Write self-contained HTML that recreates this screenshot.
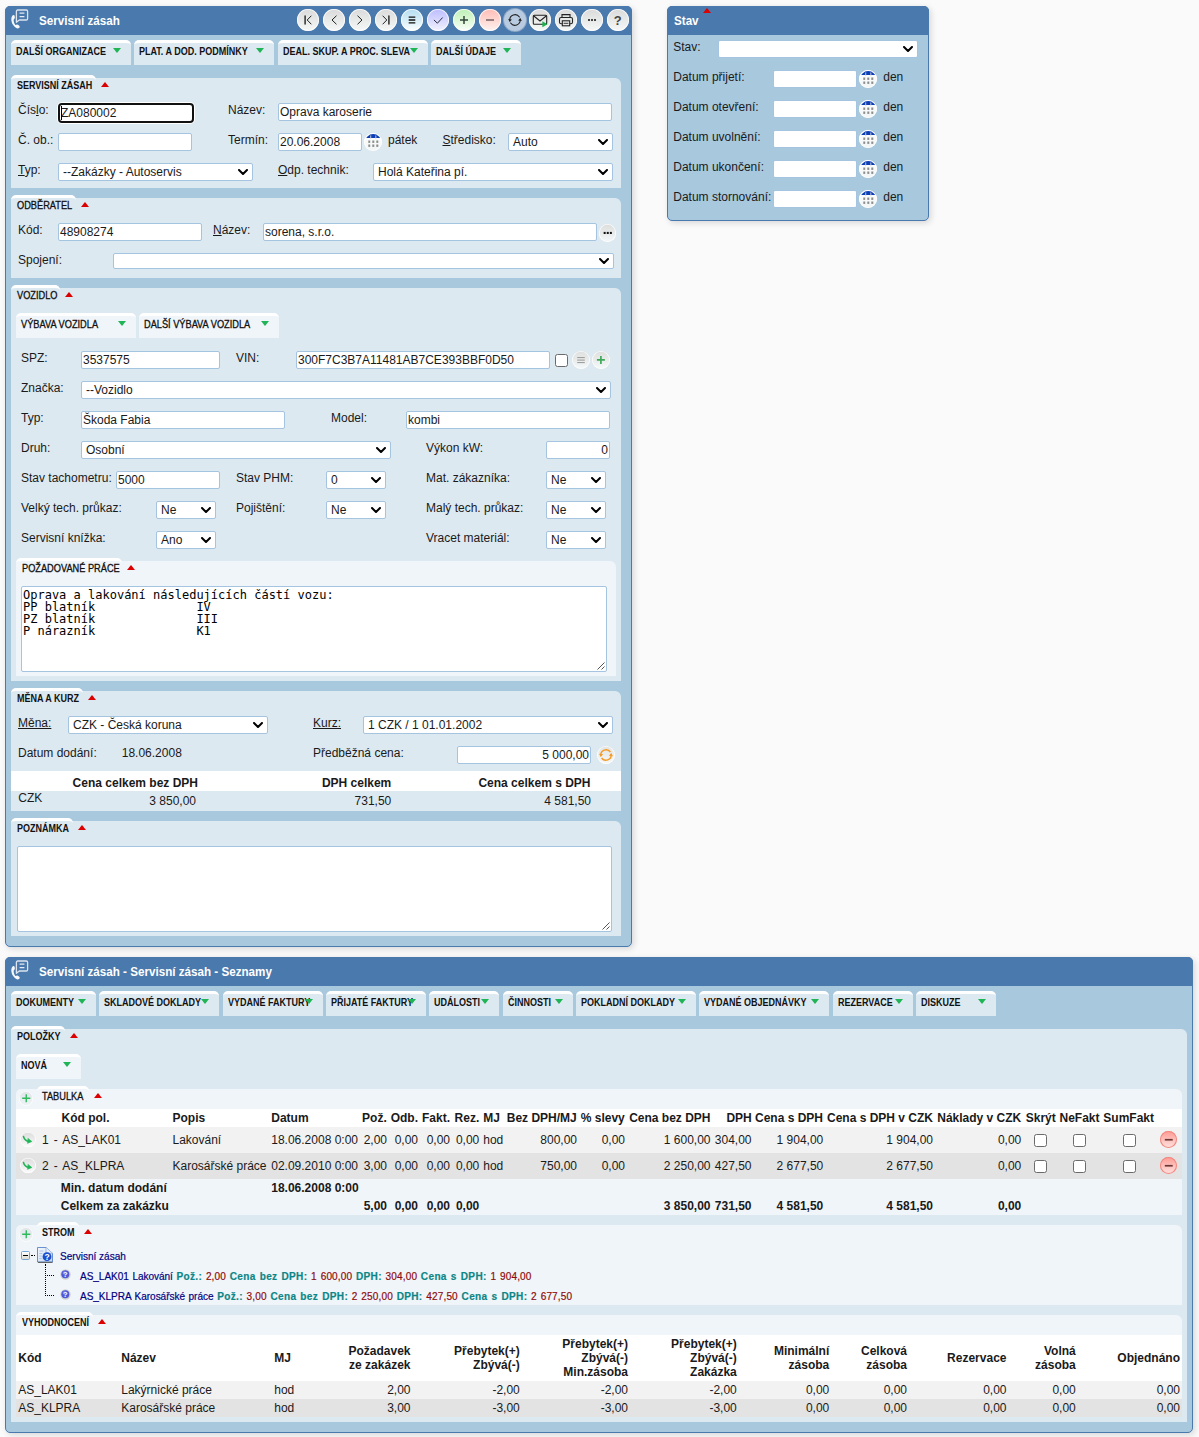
<!DOCTYPE html><html lang="cs"><head><meta charset="utf-8"><title>Servisní zásah</title><style>
*{box-sizing:border-box}
html,body{margin:0;padding:0}
body{width:1199px;height:1437px;position:relative;overflow:hidden;background:#fafafa;font-family:"Liberation Sans",sans-serif;font-size:12px;color:#1a1a1a;line-height:14px}
.a{position:absolute;white-space:nowrap}
.panel{position:absolute;background:#a8c8de;border:1px solid #4a79ad;border-radius:5px;box-shadow:2px 2px 6px rgba(0,0,0,.14)}
.ttl{position:absolute;background:#4a79ad}
.tt{position:absolute;color:#fff;font-weight:bold;font-size:12px;white-space:nowrap;transform:scaleX(.97);transform-origin:0 50%}
.tab{position:absolute;background:#dde9f1;border-top:3px solid #fff;border-radius:5px 5px 0 0}
.tab.sub{background:#f0f5f9}
.nt{position:absolute;font-weight:bold;font-size:10px;line-height:12px;white-space:nowrap;transform:scaleX(.90);transform-origin:0 50%;color:#111}
.nt.m{font-weight:normal;-webkit-text-stroke:.3px #111;transform:scaleX(.922)}
.tg{position:absolute;width:0;height:0;border-left:4px solid transparent;border-right:4px solid transparent;border-top:5px solid #1fb455}
.tr{position:absolute;width:0;height:0;border-left:4px solid transparent;border-right:4px solid transparent;border-bottom:5px solid #dc0000}
.sec{position:absolute;background:#dde9f1;border-radius:5px 6px 0 0}
.sec.sub{background:#f0f5f9}
.stab{position:absolute;background:#dde9f1;border-top:3px solid #fff;border-radius:5px 5px 0 0}
.stab.sub{background:#f0f5f9}
.in{position:absolute;background:#fff;border:1px solid #a4c4e0;border-radius:2px;white-space:nowrap;overflow:hidden;padding:0 1px;font-size:12px}
.in.r{text-align:right}
.se{position:absolute;background:#fff;border:1px solid #a4c4e0;border-radius:2px;white-space:nowrap;overflow:hidden;padding:0 0 0 4px;font-size:12px}
.se svg{position:absolute;right:4px;top:50%;margin-top:-3px}
.rb{position:absolute;border-radius:50%;background:linear-gradient(#dadada,#f6f8f8);box-shadow:inset 0 0 0 .8px rgba(255,255,255,.85)}
.cb{position:absolute;width:13px;height:13px;background:#fff;border:1px solid #6b6b6b;border-radius:2.5px}
.b{font-weight:bold}
u{text-decoration:underline}
</style></head><body>
<div class="panel" style="left:5px;top:6px;width:627.3px;height:940.7px"></div>
<div class="ttl" style="left:5px;top:6px;width:627px;height:29px;border-radius:5px 5px 0 0"></div>
<svg class="a" style="left:10px;top:9px" width="19" height="20" viewBox="0 0 19 20" fill="none" stroke="#fff" stroke-linecap="round" stroke-linejoin="round"><path d="M7.700 1h8.600a1.300 1.300 0 0 1 1.300 1.300v7.400a1.300 1.300 0 0 1-1.300 1.300H9.300L6.400 13.300V2.300A1.300 1.300 0 0 1 7.700 1z" stroke-width="1.300" opacity=".8"/><path d="M9.600 4.200h4.800M9.600 7.600h4.800" stroke-width="1.300" opacity=".85" stroke-linecap="butt"/><path d="M2.500 6.500C.6 9 1.100 13 3.200 16.100c1.200 1.800 2.800 3.300 4.200 3.400 1.400.1 2.600-.8 2.300-1.900-.3-1-1.700-2.200-2.700-2.100-.7.100-1 .7-1.500.4C4.300 14.700 3.500 12.500 3.700 10.700c.1-.8.900-1 1.100-1.800.2-.9-.1-2.100-.6-2.700-.4-.5-1.300-.3-1.700.3z" fill="#fff" stroke="none" opacity=".95"/></svg>
<div class="tt" style="left:39px;top:13.5px;line-height:14px">Servisní zásah</div>
<div class="rb" style="left:297.00px;top:9px;width:22px;height:22px;background:linear-gradient(#dadada,#f6f8f8);"><svg width="22" height="22" viewBox="0 0 22 22" fill="none" stroke="#222" stroke-width="1" stroke-linecap="round" stroke-linejoin="miter" style="position:absolute;left:0;top:0"><path d="M8.100 6.900v8.200" stroke-width="1.400"/><path d="M14.100 7L10.200 11l3.900 4"/></svg></div>
<div class="rb" style="left:323.20px;top:9px;width:22px;height:22px;background:linear-gradient(#dadada,#f6f8f8);"><svg width="22" height="22" viewBox="0 0 22 22" fill="none" stroke="#222" stroke-width="1" stroke-linecap="round" stroke-linejoin="miter" style="position:absolute;left:0;top:0"><path d="M13.200 7L9 11l4.200 4"/></svg></div>
<div class="rb" style="left:349.10px;top:9px;width:22px;height:22px;background:linear-gradient(#dadada,#f6f8f8);"><svg width="22" height="22" viewBox="0 0 22 22" fill="none" stroke="#222" stroke-width="1" stroke-linecap="round" stroke-linejoin="miter" style="position:absolute;left:0;top:0"><path d="M8.800 7L13 11l-4.200 4"/></svg></div>
<div class="rb" style="left:375.10px;top:9px;width:22px;height:22px;background:linear-gradient(#dadada,#f6f8f8);"><svg width="22" height="22" viewBox="0 0 22 22" fill="none" stroke="#222" stroke-width="1" stroke-linecap="round" stroke-linejoin="miter" style="position:absolute;left:0;top:0"><path d="M13.900 6.900v8.200" stroke-width="1.400"/><path d="M7.900 7L11.800 11l-3.900 4"/></svg></div>
<div class="rb" style="left:400.85px;top:9px;width:22px;height:22px;background:linear-gradient(#b3ddef,#fbfeff);"><svg width="22" height="22" viewBox="0 0 22 22" fill="none" stroke="#222" stroke-width="1" stroke-linecap="round" stroke-linejoin="miter" style="position:absolute;left:0;top:0"><path d="M7.700 8.200h6.600M7.700 11h6.600M7.700 13.800h6.600" stroke-width="1.300" stroke="#111" stroke-linecap="butt"/></svg></div>
<div class="rb" style="left:426.70px;top:9px;width:22px;height:22px;background:linear-gradient(#bcbcff,#f2f2ff);"><svg width="22" height="22" viewBox="0 0 22 22" fill="none" stroke="#222" stroke-width="1" stroke-linecap="round" stroke-linejoin="miter" style="position:absolute;left:0;top:0"><path d="M7.200 11.200l3.200 3 5-5.400" stroke-width="1" stroke="#2a2a3a"/></svg></div>
<div class="rb" style="left:453.00px;top:9px;width:22px;height:22px;background:linear-gradient(#bdf0b4,#fbfffa);"><svg width="22" height="22" viewBox="0 0 22 22" fill="none" stroke="#222" stroke-width="1" stroke-linecap="round" stroke-linejoin="miter" style="position:absolute;left:0;top:0"><path d="M11 7v8M7 11h8" stroke-width="1.500" stroke="#34453a" stroke-linecap="butt"/></svg></div>
<div class="rb" style="left:479.00px;top:9px;width:22px;height:22px;background:linear-gradient(#ffbcb4,#fff3f1);"><svg width="22" height="22" viewBox="0 0 22 22" fill="none" stroke="#222" stroke-width="1" stroke-linecap="round" stroke-linejoin="miter" style="position:absolute;left:0;top:0"><path d="M7 11h8" stroke-width="1.600" stroke="#7a6868" stroke-linecap="butt"/></svg></div>
<div class="rb" style="left:504.00px;top:9px;width:22px;height:22px;background:#b8cbe0;box-shadow:0 0 0 1px #8da7c7;"><svg width="22" height="22" viewBox="0 0 22 22" fill="none" stroke="#222" stroke-width="1" stroke-linecap="round" stroke-linejoin="miter" style="position:absolute;left:0;top:0"><path d="M5.800 11.600a5.300 5.300 0 0 1 9.600-3.600" stroke-width="1.100"/><path d="M16.200 10.400a5.300 5.300 0 0 1-9.600 3.600" stroke-width="1.100"/><path d="M4.200 9.900l1.500 3 2.200-2.500z" fill="#222" stroke="none"/><path d="M17.800 12.100l-1.500-3-2.200 2.500z" fill="#222" stroke="none"/></svg></div>
<div class="rb" style="left:529.20px;top:9px;width:22px;height:22px;background:linear-gradient(#dadada,#f6f8f8);"><svg width="22" height="22" viewBox="0 0 22 22" fill="none" stroke="#222" stroke-width="1" stroke-linecap="round" stroke-linejoin="miter" style="position:absolute;left:0;top:0"><rect x="4.300" y="6.300" width="13.400" height="9" rx="1" stroke-width="1.100"/><path d="M4.800 7l6.200 5 6.200-5" stroke-width="1.100"/><path d="M13.400 12.300l5 3-5 3z" fill="#19b24b" stroke="none"/></svg></div>
<div class="rb" style="left:554.75px;top:9px;width:22px;height:22px;background:linear-gradient(#dadada,#f6f8f8);"><svg width="22" height="22" viewBox="0 0 22 22" fill="none" stroke="#222" stroke-width="1" stroke-linecap="round" stroke-linejoin="miter" style="position:absolute;left:0;top:0"><path d="M7 8.500V5.600h8v2.900" stroke-width="1.100"/><rect x="4.500" y="8.500" width="13" height="6.300" rx="1.600" stroke-width="1.100"/><rect x="7.300" y="11.800" width="7.400" height="5" fill="#e8e8e8" stroke-width="1.100"/><path d="M9 14.300h4" stroke-width=".9"/></svg></div>
<div class="rb" style="left:581.00px;top:9px;width:22px;height:22px;background:linear-gradient(#dadada,#f6f8f8);"><svg width="22" height="22" viewBox="0 0 22 22" fill="none" stroke="#222" stroke-width="1" stroke-linecap="round" stroke-linejoin="miter" style="position:absolute;left:0;top:0"><path d="M8 11h.01M11 11h.01M14 11h.01" stroke-width="1.800" stroke-linecap="square" stroke="#333"/></svg></div>
<div class="rb" style="left:606.80px;top:9px;width:22px;height:22px;background:linear-gradient(#dadada,#f6f8f8);"><svg width="22" height="22" viewBox="0 0 22 22" fill="none" stroke="#222" stroke-width="1" stroke-linecap="round" stroke-linejoin="miter" style="position:absolute;left:0;top:0"></svg><span style="position:absolute;left:0;top:4.5px;width:22px;text-align:center;font-weight:bold;font-size:13px;color:#444">?</span></div>
<div class="tab" style="left:11px;top:40px;width:120px;height:25px"><span class="nt" style="left:5px;top:3px">DALŠÍ ORGANIZACE</span><i class="tg" style="right:10px;top:5px"></i></div>
<div class="tab" style="left:134.33px;top:40px;width:139.99999999999997px;height:25px"><span class="nt" style="left:5px;top:3px">PLAT. A DOD. PODMÍNKY</span><i class="tg" style="right:10px;top:5px"></i></div>
<div class="tab" style="left:277.67px;top:40px;width:150.0px;height:25px"><span class="nt" style="left:5px;top:3px">DEAL. SKUP. A PROC. SLEVA</span><i class="tg" style="right:10px;top:5px"></i></div>
<div class="tab" style="left:431px;top:40px;width:90px;height:25px"><span class="nt" style="left:5px;top:3px">DALŠÍ ÚDAJE</span><i class="tg" style="right:10px;top:5px"></i></div>
<div class="sec" style="left:11px;top:78px;width:610px;height:110px"></div>
<div class="stab" style="left:11px;top:75px;width:85px;height:14px"><span class="nt" style="left:5.75px;top:1.5px">SERVISNÍ ZÁSAH</span></div>
<i class="tr" style="left:101px;top:81.5px"></i>
<div class="a " style="left:18px;top:102.80px;">Čís<u>l</u>o:</div>
<div class="in" style="left:58px;top:103px;width:136px;height:20px;line-height:19.3px;border:2px solid #111;border-radius:4px;padding:0 1px;box-shadow:0 0 0 1px #fff;line-height:17.3px;">ZA080002</div>
<div class="a" style="left:61px;top:106px;width:1px;height:14px;background:#000"></div>
<div class="a " style="left:228px;top:102.80px;">Název:</div>
<div class="in" style="left:278px;top:103px;width:334px;height:18px;line-height:16.0px;">Oprava karoserie</div>
<div class="a " style="left:18px;top:132.80px;">Č. ob.:</div>
<div class="in" style="left:58px;top:133px;width:134px;height:18px;line-height:16.0px;"></div>
<div class="a " style="left:228px;top:132.80px;">Termín:</div>
<div class="in" style="left:278px;top:133px;width:84px;height:18px;line-height:16.0px;">20.06.2008</div>
<div class="rb" style="left:363.80px;top:132.80px;width:18.4px;height:18.4px;background:linear-gradient(#fff,#f1f5f5)"><svg width="18.4" height="18.4" viewBox="0 0 18.4 18.4" style="position:absolute;left:0;top:0"><defs><clipPath id="cc34"><rect x="0" y="0" width="18.4" height="5.1"/></clipPath></defs><circle cx="9.2" cy="9.2" r="8.1" fill="#0b3db6" clip-path="url(#cc34)"/><rect x="6.300" y="2.400" width=".9" height="3.800" fill="#d4d7da"/><rect x="11.400" y="2.400" width=".9" height="3.800" fill="#d4d7da"/><g fill="#8c8c8c"><rect x="4.300" y="7.500" width="1.900" height="2.400"/><rect x="8.300" y="7.500" width="2" height="2.400"/><rect x="12.300" y="7.500" width="2" height="2.400"/><rect x="4.300" y="11.500" width="1.900" height="2.400"/><rect x="8.300" y="11.500" width="2" height="2.400"/><rect x="12.300" y="11.500" width="2" height="2.400"/></g></svg></div>
<div class="a " style="left:388px;top:132.80px;">pátek</div>
<div class="a " style="left:442.5px;top:132.80px;"><u>S</u>tředisko:</div>
<div class="se" style="left:508px;top:133px;width:105px;height:18px;line-height:16.3px">Auto<svg width="10" height="6" viewBox="0 0 10 6"><path d="M1 1 L5 5 L9 1" fill="none" stroke="#000" stroke-width="2" stroke-linecap="round" stroke-linejoin="round"/></svg></div>
<div class="a " style="left:18px;top:162.80px;"><u>T</u>yp:</div>
<div class="se" style="left:58px;top:163px;width:195px;height:18px;line-height:16.3px">--Zakázky - Autoservis<svg width="10" height="6" viewBox="0 0 10 6"><path d="M1 1 L5 5 L9 1" fill="none" stroke="#000" stroke-width="2" stroke-linecap="round" stroke-linejoin="round"/></svg></div>
<div class="a " style="left:278px;top:162.80px;"><u>O</u>dp. technik:</div>
<div class="se" style="left:373px;top:163px;width:240px;height:18px;line-height:16.3px">Holá Kateřina pí.<svg width="10" height="6" viewBox="0 0 10 6"><path d="M1 1 L5 5 L9 1" fill="none" stroke="#000" stroke-width="2" stroke-linecap="round" stroke-linejoin="round"/></svg></div>
<div class="sec" style="left:11px;top:198px;width:610px;height:80px"></div>
<div class="stab" style="left:11px;top:195px;width:65px;height:14px"><span class="nt m" style="left:5.75px;top:1.5px">ODBĚRATEL</span></div>
<i class="tr" style="left:81px;top:201.5px"></i>
<div class="a " style="left:18px;top:222.80px;">Kód:</div>
<div class="in" style="left:58px;top:223px;width:144px;height:18px;line-height:16.0px;">48908274</div>
<div class="a " style="left:213px;top:222.80px;"><u>N</u>ázev:</div>
<div class="in" style="left:263px;top:223px;width:334px;height:18px;line-height:16.0px;">sorena, s.r.o.</div>
<div class="rb" style="left:598.55px;top:224.05px;width:17.5px;height:17.5px;background:linear-gradient(#dcdcdc,#f5f9f9)"><svg width="17.5" height="17.5" viewBox="0 0 17.500 17.500" style="position:absolute;left:0;top:0" fill="#111"><rect x="4.650" y="7.900" width="2" height="2.100"/><rect x="7.750" y="7.900" width="2" height="2.100"/><rect x="10.850" y="7.900" width="2" height="2.100"/></svg></div>
<div class="a " style="left:18px;top:252.80px;">Spojení:</div>
<div class="se" style="left:113px;top:253px;width:501px;height:16px;line-height:16.3px"><svg width="10" height="6" viewBox="0 0 10 6"><path d="M1 1 L5 5 L9 1" fill="none" stroke="#000" stroke-width="2" stroke-linecap="round" stroke-linejoin="round"/></svg></div>
<div class="sec" style="left:11px;top:288px;width:610px;height:393px"></div>
<div class="stab" style="left:11px;top:285px;width:49px;height:14px"><span class="nt m" style="left:5.75px;top:1.5px">VOZIDLO</span></div>
<i class="tr" style="left:65px;top:291.5px"></i>
<div class="tab sub" style="left:16px;top:313px;width:120px;height:25px"><span class="nt m" style="left:5px;top:3px">VÝBAVA VOZIDLA</span><i class="tg" style="right:10px;top:5px"></i></div>
<div class="tab sub" style="left:139.33px;top:313px;width:139.99999999999997px;height:25px"><span class="nt m" style="left:5px;top:3px">DALŠÍ VÝBAVA VOZIDLA</span><i class="tg" style="right:10px;top:5px"></i></div>
<div class="a " style="left:21px;top:350.80px;">SPZ:</div>
<div class="in" style="left:81px;top:351px;width:139px;height:18px;line-height:16.0px;">3537575</div>
<div class="a " style="left:236px;top:350.80px;">VIN:</div>
<div class="in" style="left:296px;top:351px;width:254px;height:18px;line-height:16.0px;">300F7C3B7A11481AB7CE393BBF0D50</div>
<div class="cb" style="left:555px;top:354px"></div>
<div class="rb" style="left:572px;top:351px;width:18px;height:18px;background:linear-gradient(#dedede,#f5f9f9)"><svg width="18" height="18" viewBox="0 0 18 18" style="position:absolute;left:0;top:0" stroke="#8c8c8c" stroke-width=".9"><path d="M5.200 6.600h7.600M5.200 9.100h7.600M5.200 11.600h7.600"/></svg></div>
<div class="rb" style="left:592px;top:351px;width:18px;height:18px;background:linear-gradient(#dedede,#f5f9f9)"><svg width="18" height="18" viewBox="0 0 18 18" style="position:absolute;left:0;top:0" stroke="#3fa95b" stroke-width="1.700"><path d="M8.900 4.900v8M4.900 8.900h8"/></svg></div>
<div class="a " style="left:21px;top:380.80px;">Značka:</div>
<div class="se" style="left:81px;top:381px;width:530px;height:18px;line-height:16.3px">--Vozidlo<svg width="10" height="6" viewBox="0 0 10 6"><path d="M1 1 L5 5 L9 1" fill="none" stroke="#000" stroke-width="2" stroke-linecap="round" stroke-linejoin="round"/></svg></div>
<div class="a " style="left:21px;top:410.80px;">Typ:</div>
<div class="in" style="left:81px;top:411px;width:204px;height:18px;line-height:16.0px;">Škoda Fabia</div>
<div class="a " style="left:331px;top:410.80px;">Model:</div>
<div class="in" style="left:406px;top:411px;width:204px;height:18px;line-height:16.0px;">kombi</div>
<div class="a " style="left:21px;top:440.80px;">Druh:</div>
<div class="se" style="left:81px;top:441px;width:310px;height:18px;line-height:16.3px">Osobní<svg width="10" height="6" viewBox="0 0 10 6"><path d="M1 1 L5 5 L9 1" fill="none" stroke="#000" stroke-width="2" stroke-linecap="round" stroke-linejoin="round"/></svg></div>
<div class="a " style="left:426px;top:440.80px;">Výkon kW:</div>
<div class="in r" style="left:546px;top:441px;width:64px;height:18px;line-height:16.0px;">0</div>
<div class="a " style="left:21px;top:470.80px;">Stav tachometru:</div>
<div class="in" style="left:116px;top:471px;width:104px;height:18px;line-height:16.0px;">5000</div>
<div class="a " style="left:236px;top:470.80px;">Stav PHM:</div>
<div class="se" style="left:326px;top:471px;width:60px;height:18px;line-height:16.3px">0<svg width="10" height="6" viewBox="0 0 10 6"><path d="M1 1 L5 5 L9 1" fill="none" stroke="#000" stroke-width="2" stroke-linecap="round" stroke-linejoin="round"/></svg></div>
<div class="a " style="left:426px;top:470.80px;">Mat. zákazníka:</div>
<div class="se" style="left:546px;top:471px;width:60px;height:18px;line-height:16.3px">Ne<svg width="10" height="6" viewBox="0 0 10 6"><path d="M1 1 L5 5 L9 1" fill="none" stroke="#000" stroke-width="2" stroke-linecap="round" stroke-linejoin="round"/></svg></div>
<div class="a " style="left:21px;top:500.80px;">Velký tech. průkaz:</div>
<div class="se" style="left:156px;top:501px;width:60px;height:18px;line-height:16.3px">Ne<svg width="10" height="6" viewBox="0 0 10 6"><path d="M1 1 L5 5 L9 1" fill="none" stroke="#000" stroke-width="2" stroke-linecap="round" stroke-linejoin="round"/></svg></div>
<div class="a " style="left:236px;top:500.80px;">Pojištění:</div>
<div class="se" style="left:326px;top:501px;width:60px;height:18px;line-height:16.3px">Ne<svg width="10" height="6" viewBox="0 0 10 6"><path d="M1 1 L5 5 L9 1" fill="none" stroke="#000" stroke-width="2" stroke-linecap="round" stroke-linejoin="round"/></svg></div>
<div class="a " style="left:426px;top:500.80px;">Malý tech. průkaz:</div>
<div class="se" style="left:546px;top:501px;width:60px;height:18px;line-height:16.3px">Ne<svg width="10" height="6" viewBox="0 0 10 6"><path d="M1 1 L5 5 L9 1" fill="none" stroke="#000" stroke-width="2" stroke-linecap="round" stroke-linejoin="round"/></svg></div>
<div class="a " style="left:21px;top:530.80px;">Servisní knížka:</div>
<div class="se" style="left:156px;top:531px;width:60px;height:18px;line-height:16.3px">Ano<svg width="10" height="6" viewBox="0 0 10 6"><path d="M1 1 L5 5 L9 1" fill="none" stroke="#000" stroke-width="2" stroke-linecap="round" stroke-linejoin="round"/></svg></div>
<div class="a " style="left:426px;top:530.80px;">Vracet materiál:</div>
<div class="se" style="left:546px;top:531px;width:60px;height:18px;line-height:16.3px">Ne<svg width="10" height="6" viewBox="0 0 10 6"><path d="M1 1 L5 5 L9 1" fill="none" stroke="#000" stroke-width="2" stroke-linecap="round" stroke-linejoin="round"/></svg></div>
<div class="sec sub" style="left:16px;top:561px;width:600px;height:115px"></div>
<div class="stab sub" style="left:16px;top:558px;width:106px;height:14px"><span class="nt m" style="left:5.75px;top:1.5px">POŽADOVANÉ PRÁCE</span></div>
<i class="tr" style="left:127px;top:564.5px"></i>
<div class="in" style="left:21px;top:586px;width:586px;height:86px;padding:2px 1px;white-space:pre;font-family:'DejaVu Sans Mono','Liberation Mono',monospace;font-size:12px;line-height:12px;color:#000">Oprava a lakování následujících částí vozu:
PP blatník              IV
PZ blatník              III
P nárazník              K1<svg width="9" height="9" viewBox="0 0 9 9" style="position:absolute;right:1px;bottom:1px" stroke="#555" stroke-width="1"><path d="M8.500 1.500L1.500 8.500M8.500 5.500L5.500 8.500"/></svg></div>
<div class="sec" style="left:11px;top:691px;width:610px;height:120px"></div>
<div class="stab" style="left:11px;top:688px;width:71.5px;height:14px"><span class="nt" style="left:5.75px;top:1.5px">MĚNA A KURZ</span></div>
<i class="tr" style="left:87.5px;top:694.5px"></i>
<div class="a " style="left:18px;top:715.80px;"><u>Měna:</u></div>
<div class="se" style="left:68px;top:716px;width:200px;height:18px;line-height:16.3px">CZK - Česká koruna<svg width="10" height="6" viewBox="0 0 10 6"><path d="M1 1 L5 5 L9 1" fill="none" stroke="#000" stroke-width="2" stroke-linecap="round" stroke-linejoin="round"/></svg></div>
<div class="a " style="left:313px;top:715.80px;"><u>Kurz:</u></div>
<div class="se" style="left:363px;top:716px;width:250px;height:18px;line-height:16.3px">1 CZK / 1 01.01.2002<svg width="10" height="6" viewBox="0 0 10 6"><path d="M1 1 L5 5 L9 1" fill="none" stroke="#000" stroke-width="2" stroke-linecap="round" stroke-linejoin="round"/></svg></div>
<div class="a " style="left:18px;top:745.80px;">Datum dodání:</div>
<div class="a " style="left:121.75px;top:745.80px;">18.06.2008</div>
<div class="a " style="left:313px;top:745.80px;">Předběžná cena:</div>
<div class="in r" style="left:457px;top:746px;width:134px;height:18px;line-height:16.0px;">5 000,00</div>
<div class="rb" style="left:597px;top:746px;width:18px;height:18px;background:linear-gradient(#e2e4e4,#f6f8f8)"><svg width="18" height="18" viewBox="0 0 22 22" fill="none" stroke="#f59a23" stroke-width="1.500" style="position:absolute;left:0;top:0"><g transform="translate(11 11) scale(1.220) translate(-11 -11)"><path d="M5.800 11.600a5.300 5.300 0 0 1 9.600-3.600"/><path d="M16.200 10.400a5.300 5.300 0 0 1-9.600 3.600"/><path d="M4 9.700l1.700 3.400 2.500-2.800z" fill="#f59a23" stroke="none"/><path d="M18 12.300l-1.700-3.400-2.500 2.800z" fill="#f59a23" stroke="none"/></g></svg></div>
<div class="a" style="left:11px;top:771px;width:610px;height:20px;background:#fff"></div>
<div class="a b" style="right:1001.0px;top:775.55px">Cena celkem bez DPH</div>
<div class="a b" style="right:807.75px;top:775.55px">DPH celkem</div>
<div class="a b" style="right:608.5px;top:775.55px">Cena celkem s DPH</div>
<div class="a " style="left:18.25px;top:791.10px;">CZK</div>
<div class="a " style="right:1003.0px;top:794.10px">3 850,00</div>
<div class="a " style="right:807.75px;top:794.10px">731,50</div>
<div class="a " style="right:608.0px;top:794.10px">4 581,50</div>
<div class="sec" style="left:11px;top:821px;width:610px;height:115px"></div>
<div class="stab" style="left:11px;top:818px;width:61.5px;height:14px"><span class="nt" style="left:5.75px;top:1.5px">POZNÁMKA</span></div>
<i class="tr" style="left:77.5px;top:824.5px"></i>
<div class="in" style="left:16.5px;top:846px;width:595.5px;height:85.7px"><svg width="9" height="9" viewBox="0 0 9 9" style="position:absolute;right:1px;bottom:1px" stroke="#555" stroke-width="1"><path d="M8.500 1.500L1.500 8.500M8.500 5.500L5.500 8.500"/></svg></div>
<div class="panel" style="left:667px;top:6px;width:261.5px;height:214.5px"></div>
<div class="ttl" style="left:667px;top:6px;width:261.5px;height:29px;border-radius:5px 5px 0 0"></div>
<div class="tt" style="left:673.75px;top:13.5px;line-height:14px">Stav</div>
<i class="tr" style="left:703px;top:8px"></i>
<div class="a " style="left:673.25px;top:39.80px;">Stav:</div>
<div class="se" style="left:718px;top:40px;width:200px;height:18px;line-height:16.3px"><svg width="10" height="6" viewBox="0 0 10 6"><path d="M1 1 L5 5 L9 1" fill="none" stroke="#000" stroke-width="2" stroke-linecap="round" stroke-linejoin="round"/></svg></div>
<div class="a " style="left:673.25px;top:69.80px;">Datum přijetí:</div>
<div class="in" style="left:773px;top:70px;width:84px;height:18px;line-height:16.0px;"></div>
<div class="rb" style="left:858.80px;top:69.80px;width:18.4px;height:18.4px;background:linear-gradient(#fff,#f1f5f5)"><svg width="18.4" height="18.4" viewBox="0 0 18.4 18.4" style="position:absolute;left:0;top:0"><defs><clipPath id="cc126"><rect x="0" y="0" width="18.4" height="5.1"/></clipPath></defs><circle cx="9.2" cy="9.2" r="8.1" fill="#0b3db6" clip-path="url(#cc126)"/><rect x="6.300" y="2.400" width=".9" height="3.800" fill="#d4d7da"/><rect x="11.400" y="2.400" width=".9" height="3.800" fill="#d4d7da"/><g fill="#8c8c8c"><rect x="4.300" y="7.500" width="1.900" height="2.400"/><rect x="8.300" y="7.500" width="2" height="2.400"/><rect x="12.300" y="7.500" width="2" height="2.400"/><rect x="4.300" y="11.500" width="1.900" height="2.400"/><rect x="8.300" y="11.500" width="2" height="2.400"/><rect x="12.300" y="11.500" width="2" height="2.400"/></g></svg></div>
<div class="a " style="left:883.25px;top:69.80px;">den</div>
<div class="a " style="left:673.25px;top:99.80px;">Datum otevření:</div>
<div class="in" style="left:773px;top:100px;width:84px;height:18px;line-height:16.0px;"></div>
<div class="rb" style="left:858.80px;top:99.80px;width:18.4px;height:18.4px;background:linear-gradient(#fff,#f1f5f5)"><svg width="18.4" height="18.4" viewBox="0 0 18.4 18.4" style="position:absolute;left:0;top:0"><defs><clipPath id="cc130"><rect x="0" y="0" width="18.4" height="5.1"/></clipPath></defs><circle cx="9.2" cy="9.2" r="8.1" fill="#0b3db6" clip-path="url(#cc130)"/><rect x="6.300" y="2.400" width=".9" height="3.800" fill="#d4d7da"/><rect x="11.400" y="2.400" width=".9" height="3.800" fill="#d4d7da"/><g fill="#8c8c8c"><rect x="4.300" y="7.500" width="1.900" height="2.400"/><rect x="8.300" y="7.500" width="2" height="2.400"/><rect x="12.300" y="7.500" width="2" height="2.400"/><rect x="4.300" y="11.500" width="1.900" height="2.400"/><rect x="8.300" y="11.500" width="2" height="2.400"/><rect x="12.300" y="11.500" width="2" height="2.400"/></g></svg></div>
<div class="a " style="left:883.25px;top:99.80px;">den</div>
<div class="a " style="left:673.25px;top:129.80px;">Datum uvolnění:</div>
<div class="in" style="left:773px;top:130px;width:84px;height:18px;line-height:16.0px;"></div>
<div class="rb" style="left:858.80px;top:129.80px;width:18.4px;height:18.4px;background:linear-gradient(#fff,#f1f5f5)"><svg width="18.4" height="18.4" viewBox="0 0 18.4 18.4" style="position:absolute;left:0;top:0"><defs><clipPath id="cc134"><rect x="0" y="0" width="18.4" height="5.1"/></clipPath></defs><circle cx="9.2" cy="9.2" r="8.1" fill="#0b3db6" clip-path="url(#cc134)"/><rect x="6.300" y="2.400" width=".9" height="3.800" fill="#d4d7da"/><rect x="11.400" y="2.400" width=".9" height="3.800" fill="#d4d7da"/><g fill="#8c8c8c"><rect x="4.300" y="7.500" width="1.900" height="2.400"/><rect x="8.300" y="7.500" width="2" height="2.400"/><rect x="12.300" y="7.500" width="2" height="2.400"/><rect x="4.300" y="11.500" width="1.900" height="2.400"/><rect x="8.300" y="11.500" width="2" height="2.400"/><rect x="12.300" y="11.500" width="2" height="2.400"/></g></svg></div>
<div class="a " style="left:883.25px;top:129.80px;">den</div>
<div class="a " style="left:673.25px;top:159.80px;">Datum ukončení:</div>
<div class="in" style="left:773px;top:160px;width:84px;height:18px;line-height:16.0px;"></div>
<div class="rb" style="left:858.80px;top:159.80px;width:18.4px;height:18.4px;background:linear-gradient(#fff,#f1f5f5)"><svg width="18.4" height="18.4" viewBox="0 0 18.4 18.4" style="position:absolute;left:0;top:0"><defs><clipPath id="cc138"><rect x="0" y="0" width="18.4" height="5.1"/></clipPath></defs><circle cx="9.2" cy="9.2" r="8.1" fill="#0b3db6" clip-path="url(#cc138)"/><rect x="6.300" y="2.400" width=".9" height="3.800" fill="#d4d7da"/><rect x="11.400" y="2.400" width=".9" height="3.800" fill="#d4d7da"/><g fill="#8c8c8c"><rect x="4.300" y="7.500" width="1.900" height="2.400"/><rect x="8.300" y="7.500" width="2" height="2.400"/><rect x="12.300" y="7.500" width="2" height="2.400"/><rect x="4.300" y="11.500" width="1.900" height="2.400"/><rect x="8.300" y="11.500" width="2" height="2.400"/><rect x="12.300" y="11.500" width="2" height="2.400"/></g></svg></div>
<div class="a " style="left:883.25px;top:159.80px;">den</div>
<div class="a " style="left:673.25px;top:189.80px;">Datum stornování:</div>
<div class="in" style="left:773px;top:190px;width:84px;height:18px;line-height:16.0px;"></div>
<div class="rb" style="left:858.80px;top:189.80px;width:18.4px;height:18.4px;background:linear-gradient(#fff,#f1f5f5)"><svg width="18.4" height="18.4" viewBox="0 0 18.4 18.4" style="position:absolute;left:0;top:0"><defs><clipPath id="cc142"><rect x="0" y="0" width="18.4" height="5.1"/></clipPath></defs><circle cx="9.2" cy="9.2" r="8.1" fill="#0b3db6" clip-path="url(#cc142)"/><rect x="6.300" y="2.400" width=".9" height="3.800" fill="#d4d7da"/><rect x="11.400" y="2.400" width=".9" height="3.800" fill="#d4d7da"/><g fill="#8c8c8c"><rect x="4.300" y="7.500" width="1.900" height="2.400"/><rect x="8.300" y="7.500" width="2" height="2.400"/><rect x="12.300" y="7.500" width="2" height="2.400"/><rect x="4.300" y="11.500" width="1.900" height="2.400"/><rect x="8.300" y="11.500" width="2" height="2.400"/><rect x="12.300" y="11.500" width="2" height="2.400"/></g></svg></div>
<div class="a " style="left:883.25px;top:189.80px;">den</div>
<div class="panel" style="left:5px;top:957px;width:1187.5px;height:476px"></div>
<div class="ttl" style="left:5px;top:957px;width:1187.5px;height:29px;border-radius:5px 5px 0 0"></div>
<svg class="a" style="left:10px;top:960px" width="19" height="20" viewBox="0 0 19 20" fill="none" stroke="#fff" stroke-linecap="round" stroke-linejoin="round"><path d="M7.700 1h8.600a1.300 1.300 0 0 1 1.300 1.300v7.400a1.300 1.300 0 0 1-1.300 1.300H9.300L6.400 13.300V2.300A1.300 1.300 0 0 1 7.700 1z" stroke-width="1.300" opacity=".8"/><path d="M9.600 4.200h4.800M9.600 7.600h4.800" stroke-width="1.300" opacity=".85" stroke-linecap="butt"/><path d="M2.500 6.500C.6 9 1.100 13 3.200 16.100c1.200 1.800 2.800 3.300 4.200 3.400 1.400.1 2.600-.8 2.300-1.900-.3-1-1.700-2.200-2.700-2.100-.7.100-1 .7-1.500.4C4.300 14.700 3.500 12.500 3.700 10.700c.1-.8.900-1 1.100-1.800.2-.9-.1-2.100-.6-2.700-.4-.5-1.300-.3-1.700.3z" fill="#fff" stroke="none" opacity=".95"/></svg>
<div class="tt" style="left:39px;top:964.5px;line-height:14px">Servisní zásah - Servisní zásah - Seznamy</div>
<div class="tab" style="left:11px;top:991px;width:85px;height:25px"><span class="nt" style="left:5px;top:3px">DOKUMENTY</span><i class="tg" style="right:10px;top:5px"></i></div>
<div class="tab" style="left:99.33px;top:991px;width:120.00000000000001px;height:25px"><span class="nt" style="left:5px;top:3px">SKLADOVÉ DOKLADY</span><i class="tg" style="right:10px;top:5px"></i></div>
<div class="tab" style="left:222.66px;top:991px;width:100.00000000000003px;height:25px"><span class="nt" style="left:5px;top:3px">VYDANÉ FAKTURY</span><i class="tg" style="right:10px;top:5px"></i></div>
<div class="tab" style="left:325.99px;top:991px;width:100.0px;height:25px"><span class="nt" style="left:5px;top:3px">PŘIJATÉ FAKTURY</span><i class="tg" style="right:10px;top:5px"></i></div>
<div class="tab" style="left:429.32px;top:991px;width:70.0px;height:25px"><span class="nt" style="left:5px;top:3px">UDÁLOSTI</span><i class="tg" style="right:10px;top:5px"></i></div>
<div class="tab" style="left:502.65px;top:991px;width:70.0px;height:25px"><span class="nt" style="left:5px;top:3px">ČINNOSTI</span><i class="tg" style="right:10px;top:5px"></i></div>
<div class="tab" style="left:575.98px;top:991px;width:120.0px;height:25px"><span class="nt" style="left:5px;top:3px">POKLADNÍ DOKLADY</span><i class="tg" style="right:10px;top:5px"></i></div>
<div class="tab" style="left:699.31px;top:991px;width:130.0px;height:25px"><span class="nt" style="left:5px;top:3px">VYDANÉ OBJEDNÁVKY</span><i class="tg" style="right:10px;top:5px"></i></div>
<div class="tab" style="left:832.64px;top:991px;width:80.0px;height:25px"><span class="nt" style="left:5px;top:3px">REZERVACE</span><i class="tg" style="right:10px;top:5px"></i></div>
<div class="tab" style="left:915.97px;top:991px;width:80.0px;height:25px"><span class="nt" style="left:5px;top:3px">DISKUZE</span><i class="tg" style="right:10px;top:5px"></i></div>
<div class="sec" style="left:11px;top:1029px;width:1175.5px;height:393px"></div>
<div class="stab" style="left:11px;top:1026px;width:53.5px;height:14px"><span class="nt" style="left:5.75px;top:1.5px">POLOŽKY</span></div>
<i class="tr" style="left:69.5px;top:1032.5px"></i>
<div class="tab sub" style="left:16px;top:1053.5px;width:64.5px;height:25.0px"><span class="nt" style="left:5px;top:3px">NOVÁ</span><i class="tg" style="right:10px;top:5px"></i></div>
<div class="sec sub" style="left:16px;top:1089px;width:1165.5px;height:125.5px"></div>
<div class="stab sub" style="left:36.5px;top:1086px;width:52px;height:14px"><span class="nt m" style="left:5.75px;top:1.5px">TABULKA</span></div>
<i class="tr" style="left:93.5px;top:1092.5px"></i>
<div class="rb" style="left:18.5px;top:1091.25px;width:14.5px;height:14.5px;background:linear-gradient(#dfe5e9,#eef3f6)"><svg width="14.5" height="14.5" viewBox="0 0 14.500 14.500" style="position:absolute;left:0;top:0" stroke="#2fba5c" stroke-width="1.400"><path d="M7.250 3.200v8.100M3.200 7.250h8.100"/></svg></div>
<div class="a" style="left:16px;top:1109px;width:1165.5px;height:18px;background:#fff"></div>
<div class="a" style="left:16px;top:1127px;width:1165.5px;height:26px;background:#f2f2f2"></div>
<div class="a" style="left:16px;top:1153px;width:1165.5px;height:25.5px;background:#e3e3e3"></div>
<div class="a b" style="left:61.5px;top:1110.80px;">Kód pol.</div>
<div class="a b" style="left:172.5px;top:1110.80px;">Popis</div>
<div class="a b" style="left:271.25px;top:1110.80px;">Datum</div>
<div class="a b" style="left:483.25px;top:1110.80px;">MJ</div>
<div class="a b" style="right:812.25px;top:1110.80px">Pož.</div>
<div class="a b" style="right:781.0px;top:1110.80px">Odb.</div>
<div class="a b" style="right:749.0px;top:1110.80px">Fakt.</div>
<div class="a b" style="right:719.75px;top:1110.80px">Rez.</div>
<div class="a b" style="right:622.25px;top:1110.80px">Bez DPH/MJ</div>
<div class="a b" style="right:574.25px;top:1110.80px">% slevy</div>
<div class="a b" style="right:488.5px;top:1110.80px">Cena bez DPH</div>
<div class="a b" style="right:447.25px;top:1110.80px">DPH</div>
<div class="a b" style="right:376.0px;top:1110.80px">Cena s DPH</div>
<div class="a b" style="right:266.0px;top:1110.80px">Cena s DPH v CZK</div>
<div class="a b" style="right:177.75px;top:1110.80px">Náklady v CZK</div>
<div class="a b" style="right:143.25px;top:1110.80px">Skrýt</div>
<div class="a b" style="right:99.5px;top:1110.80px">NeFakt</div>
<div class="a b" style="right:45.0px;top:1110.80px">SumFakt</div>
<div class="rb" style="left:20.0px;top:1131.75px;width:15.5px;height:15.5px;background:linear-gradient(#dcdcdc,#fbfbfb)"><svg width="15.5" height="15.5" viewBox="0 0 15.500 15.500" style="position:absolute;left:0;top:0" fill="none" stroke="#1fb455" stroke-width="1.500" stroke-linecap="round"><path d="M3.500 4.500c.8 3 2.800 4.600 5.500 4.800"/><path d="M8.200 6.600l3.600 2.900-4 1.700z" fill="#1fb455" stroke-width=".6"/></svg></div>
<div class="a " style="left:42px;top:1133.05px;word-spacing:1.8px">1 - AS_LAK01</div>
<div class="a " style="left:172.5px;top:1133.05px;">Lakování</div>
<div class="a " style="left:271.25px;top:1133.05px;">18.06.2008 0:00</div>
<div class="a " style="right:812.0px;top:1133.05px">2,00</div>
<div class="a " style="right:781.0px;top:1133.05px">0,00</div>
<div class="a " style="right:749.0px;top:1133.05px">0,00</div>
<div class="a " style="right:719.75px;top:1133.05px">0,00</div>
<div class="a " style="left:483.25px;top:1133.05px;">hod</div>
<div class="a " style="right:622.0px;top:1133.05px">800,00</div>
<div class="a " style="right:574.0px;top:1133.05px">0,00</div>
<div class="a " style="right:488.5px;top:1133.05px">1 600,00</div>
<div class="a " style="right:447.5px;top:1133.05px">304,00</div>
<div class="a " style="right:375.75px;top:1133.05px">1 904,00</div>
<div class="a " style="right:266.0px;top:1133.05px">1 904,00</div>
<div class="a " style="right:177.75px;top:1133.05px">0,00</div>
<div class="cb" style="left:1034px;top:1133.5px"></div>
<div class="cb" style="left:1072.75px;top:1133.5px"></div>
<div class="cb" style="left:1122.5px;top:1133.5px"></div>
<div class="rb" style="left:1159.65px;top:1130.75px;width:17.5px;height:17.5px;background:linear-gradient(#ff9a94,#ffe3e0);box-shadow:inset 0 0 0 1px #f08880"><svg width="17.5" height="17.5" viewBox="0 0 17.500 17.500" style="position:absolute;left:0;top:0" stroke="#6b3a36" stroke-width="1.700"><path d="M4.800 8.750h7.900"/></svg></div>
<div class="rb" style="left:20.0px;top:1157.75px;width:15.5px;height:15.5px;background:linear-gradient(#dcdcdc,#fbfbfb)"><svg width="15.5" height="15.5" viewBox="0 0 15.500 15.500" style="position:absolute;left:0;top:0" fill="none" stroke="#1fb455" stroke-width="1.500" stroke-linecap="round"><path d="M3.500 4.500c.8 3 2.800 4.600 5.500 4.800"/><path d="M8.200 6.600l3.600 2.900-4 1.700z" fill="#1fb455" stroke-width=".6"/></svg></div>
<div class="a " style="left:42px;top:1159.05px;word-spacing:1.8px">2 - AS_KLPRA</div>
<div class="a " style="left:172.5px;top:1159.05px;">Karosářské práce</div>
<div class="a " style="left:271.25px;top:1159.05px;">02.09.2010 0:00</div>
<div class="a " style="right:812.0px;top:1159.05px">3,00</div>
<div class="a " style="right:781.0px;top:1159.05px">0,00</div>
<div class="a " style="right:749.0px;top:1159.05px">0,00</div>
<div class="a " style="right:719.75px;top:1159.05px">0,00</div>
<div class="a " style="left:483.25px;top:1159.05px;">hod</div>
<div class="a " style="right:622.0px;top:1159.05px">750,00</div>
<div class="a " style="right:574.0px;top:1159.05px">0,00</div>
<div class="a " style="right:488.5px;top:1159.05px">2 250,00</div>
<div class="a " style="right:447.5px;top:1159.05px">427,50</div>
<div class="a " style="right:375.75px;top:1159.05px">2 677,50</div>
<div class="a " style="right:266.0px;top:1159.05px">2 677,50</div>
<div class="a " style="right:177.75px;top:1159.05px">0,00</div>
<div class="cb" style="left:1034px;top:1159.5px"></div>
<div class="cb" style="left:1072.75px;top:1159.5px"></div>
<div class="cb" style="left:1122.5px;top:1159.5px"></div>
<div class="rb" style="left:1159.65px;top:1156.75px;width:17.5px;height:17.5px;background:linear-gradient(#ff9a94,#ffe3e0);box-shadow:inset 0 0 0 1px #f08880"><svg width="17.5" height="17.5" viewBox="0 0 17.500 17.500" style="position:absolute;left:0;top:0" stroke="#6b3a36" stroke-width="1.700"><path d="M4.800 8.750h7.900"/></svg></div>
<div class="a b" style="left:60.75px;top:1180.80px;">Min. datum dodání</div>
<div class="a b" style="left:271.25px;top:1180.80px;">18.06.2008 0:00</div>
<div class="a b" style="left:60.75px;top:1198.80px;">Celkem za zakázku</div>
<div class="a b" style="right:812.0px;top:1198.80px">5,00</div>
<div class="a b" style="right:781.0px;top:1198.80px">0,00</div>
<div class="a b" style="right:749.0px;top:1198.80px">0,00</div>
<div class="a b" style="right:719.75px;top:1198.80px">0,00</div>
<div class="a b" style="right:488.5px;top:1198.80px">3 850,00</div>
<div class="a b" style="right:447.5px;top:1198.80px">731,50</div>
<div class="a b" style="right:375.75px;top:1198.80px">4 581,50</div>
<div class="a b" style="right:266.0px;top:1198.80px">4 581,50</div>
<div class="a b" style="right:177.75px;top:1198.80px">0,00</div>
<div class="sec sub" style="left:16px;top:1225px;width:1165.5px;height:79.5px"></div>
<div class="stab sub" style="left:36.5px;top:1222px;width:42px;height:14px"><span class="nt" style="left:5.75px;top:1.5px">STROM</span></div>
<i class="tr" style="left:83.5px;top:1228.5px"></i>
<div class="rb" style="left:18.5px;top:1227.25px;width:14.5px;height:14.5px;background:linear-gradient(#dfe5e9,#eef3f6)"><svg width="14.5" height="14.5" viewBox="0 0 14.500 14.500" style="position:absolute;left:0;top:0" stroke="#2fba5c" stroke-width="1.400"><path d="M7.250 3.200v8.100M3.200 7.250h8.100"/></svg></div>
<div class="a" style="left:21px;top:1251px;width:9px;height:9px;border:1px solid #78a4d4;background:linear-gradient(#fff,#dcdcd4);border-radius:1.500px"><div style="position:absolute;left:1px;top:2.800px;width:5px;height:1.400px;background:#000"></div></div>
<div class="a" style="left:31px;top:1255px;width:4px;height:0;border-top:1px dotted #000"></div>
<div class="a" style="left:45px;top:1264px;width:0;height:32px;border-left:1px dotted #000"></div>
<div class="a" style="left:45px;top:1275px;width:9px;height:0;border-top:1px dotted #000"></div>
<div class="a" style="left:45px;top:1295px;width:9px;height:0;border-top:1px dotted #000"></div>
<svg class="a" style="left:37px;top:1246.700px" width="16" height="16" viewBox="0 0 16 16"><defs><linearGradient id="dg" x1="0" y1="0" x2="1" y2="1"><stop offset="0" stop-color="#f4f8fd"/><stop offset="1" stop-color="#c3d4ee"/></linearGradient></defs><path d="M.5.500H9l6.500 5.800V15H.5z" fill="url(#dg)" stroke="#5a84c8" stroke-width=".9"/><path d="M1 15.400h14.500" stroke="#5a5a5a" stroke-width="1"/><path d="M9 .5v5.800h6.500" fill="#e6eefa" stroke="#8aa6d4" stroke-width=".7"/><path d="M2.300 4h4M2.300 6.500h3M2.300 9h2.500M2.300 11.500h2.500" stroke="#a9c0e4" stroke-width=".9"/><circle cx="10" cy="9.700" r="4.400" fill="#1b4fd0"/><text x="10" y="12.700" font-family="Liberation Sans" font-weight="bold" font-size="8.500" fill="#fff" text-anchor="middle">?</text></svg>
<div class="a" style="left:60px;top:1249.5px;font-family:'Liberation Sans','DejaVu Sans',sans-serif;font-size:10.05px;-webkit-text-stroke:.18px;color:#000080;transform:scaleX(1);">Servisní zásah</div>
<svg class="a" style="left:60px;top:1269px" width="11" height="11" viewBox="0 0 11 11"><circle cx="5.500" cy="5.500" r="5.200" fill="#d2d2d2"/><circle cx="5.300" cy="5.200" r="4" fill="#5058d6"/><circle cx="4.600" cy="4" r="2" fill="#8088ea" opacity=".6"/><text x="5.300" y="8" font-family="Liberation Sans" font-weight="bold" font-size="7.500" fill="#fff" text-anchor="middle">?</text></svg>
<svg class="a" style="left:60px;top:1289px" width="11" height="11" viewBox="0 0 11 11"><circle cx="5.500" cy="5.500" r="5.200" fill="#d2d2d2"/><circle cx="5.300" cy="5.200" r="4" fill="#5058d6"/><circle cx="4.600" cy="4" r="2" fill="#8088ea" opacity=".6"/><text x="5.300" y="8" font-family="Liberation Sans" font-weight="bold" font-size="7.500" fill="#fff" text-anchor="middle">?</text></svg>
<div class="a" style="left:80px;top:1269.5px;font-family:'Liberation Sans','DejaVu Sans',sans-serif;font-size:10.05px;-webkit-text-stroke:.18px;color:#000080;word-spacing:.9px"><span style="letter-spacing:-.05px">AS_LAK01 Lakování</span> <b style="color:#0c8686;letter-spacing:.34px">Pož.:</b> <span style="color:#8e0a0a;letter-spacing:.14px">2,00</span> <b style="color:#0c8686;letter-spacing:.34px">Cena bez DPH:</b> <span style="color:#8e0a0a;letter-spacing:.14px">1 600,00</span> <b style="color:#0c8686;letter-spacing:.34px">DPH:</b> <span style="color:#8e0a0a;letter-spacing:.14px">304,00</span> <b style="color:#0c8686;letter-spacing:.34px">Cena s DPH:</b> <span style="color:#8e0a0a;letter-spacing:.14px">1 904,00</span></div>
<div class="a" style="left:80px;top:1289.5px;font-family:'Liberation Sans','DejaVu Sans',sans-serif;font-size:10.05px;-webkit-text-stroke:.18px;color:#000080;word-spacing:.9px"><span style="letter-spacing:-.05px">AS_KLPRA Karosářské práce</span> <b style="color:#0c8686;letter-spacing:.34px">Pož.:</b> <span style="color:#8e0a0a;letter-spacing:.14px">3,00</span> <b style="color:#0c8686;letter-spacing:.34px">Cena bez DPH:</b> <span style="color:#8e0a0a;letter-spacing:.14px">2 250,00</span> <b style="color:#0c8686;letter-spacing:.34px">DPH:</b> <span style="color:#8e0a0a;letter-spacing:.14px">427,50</span> <b style="color:#0c8686;letter-spacing:.34px">Cena s DPH:</b> <span style="color:#8e0a0a;letter-spacing:.14px">2 677,50</span></div>
<div class="sec sub" style="left:16px;top:1315px;width:1165.5px;height:102px"></div>
<div class="stab sub" style="left:16px;top:1312px;width:76.5px;height:14px"><span class="nt" style="left:5.75px;top:1.5px">VYHODNOCENÍ</span></div>
<i class="tr" style="left:97.5px;top:1318.5px"></i>
<div class="a" style="left:16px;top:1335px;width:1165.5px;height:45.5px;background:#fff"></div>
<div class="a" style="left:16px;top:1380.5px;width:1165.5px;height:18.5px;background:#f2f2f2"></div>
<div class="a" style="left:16px;top:1399px;width:1165.5px;height:18px;background:#e3e3e3"></div>
<div class="a b" style="left:18.25px;top:1351.30px;">Kód</div>
<div class="a b" style="left:121.25px;top:1351.30px;">Název</div>
<div class="a b" style="left:274.25px;top:1351.30px;">MJ</div>
<div class="a b" style="right:788.5px;top:1343.5px;text-align:right;line-height:14px">Požadavek<br>ze zakázek</div>
<div class="a b" style="right:679.25px;top:1343.5px;text-align:right;line-height:14px">Přebytek(+)<br>Zbývá(-)</div>
<div class="a b" style="right:571.0px;top:1336.5px;text-align:right;line-height:14px">Přebytek(+)<br>Zbývá(-)<br>Min.zásoba</div>
<div class="a b" style="right:462.25px;top:1336.5px;text-align:right;line-height:14px">Přebytek(+)<br>Zbývá(-)<br>Zakázka</div>
<div class="a b" style="right:369.75px;top:1343.5px;text-align:right;line-height:14px">Minimální<br>zásoba</div>
<div class="a b" style="right:292.0px;top:1343.5px;text-align:right;line-height:14px">Celková<br>zásoba</div>
<div class="a b" style="right:192.5px;top:1350.5px;text-align:right;line-height:14px">Rezervace</div>
<div class="a b" style="right:123.25px;top:1343.5px;text-align:right;line-height:14px">Volná<br>zásoba</div>
<div class="a b" style="right:19.0px;top:1350.5px;text-align:right;line-height:14px">Objednáno</div>
<div class="a " style="left:18.25px;top:1383.10px;">AS_LAK01</div>
<div class="a " style="left:121.25px;top:1383.10px;">Lakýrnické práce</div>
<div class="a " style="left:274.25px;top:1383.10px;">hod</div>
<div class="a " style="right:788.5px;top:1383.10px">2,00</div>
<div class="a " style="right:679.25px;top:1383.10px">-2,00</div>
<div class="a " style="right:571.0px;top:1383.10px">-2,00</div>
<div class="a " style="right:462.25px;top:1383.10px">-2,00</div>
<div class="a " style="right:369.75px;top:1383.10px">0,00</div>
<div class="a " style="right:292.0px;top:1383.10px">0,00</div>
<div class="a " style="right:192.5px;top:1383.10px">0,00</div>
<div class="a " style="right:123.25px;top:1383.10px">0,00</div>
<div class="a " style="right:19.0px;top:1383.10px">0,00</div>
<div class="a " style="left:18.25px;top:1401.10px;">AS_KLPRA</div>
<div class="a " style="left:121.25px;top:1401.10px;">Karosářské práce</div>
<div class="a " style="left:274.25px;top:1401.10px;">hod</div>
<div class="a " style="right:788.5px;top:1401.10px">3,00</div>
<div class="a " style="right:679.25px;top:1401.10px">-3,00</div>
<div class="a " style="right:571.0px;top:1401.10px">-3,00</div>
<div class="a " style="right:462.25px;top:1401.10px">-3,00</div>
<div class="a " style="right:369.75px;top:1401.10px">0,00</div>
<div class="a " style="right:292.0px;top:1401.10px">0,00</div>
<div class="a " style="right:192.5px;top:1401.10px">0,00</div>
<div class="a " style="right:123.25px;top:1401.10px">0,00</div>
<div class="a " style="right:19.0px;top:1401.10px">0,00</div>
</body></html>
